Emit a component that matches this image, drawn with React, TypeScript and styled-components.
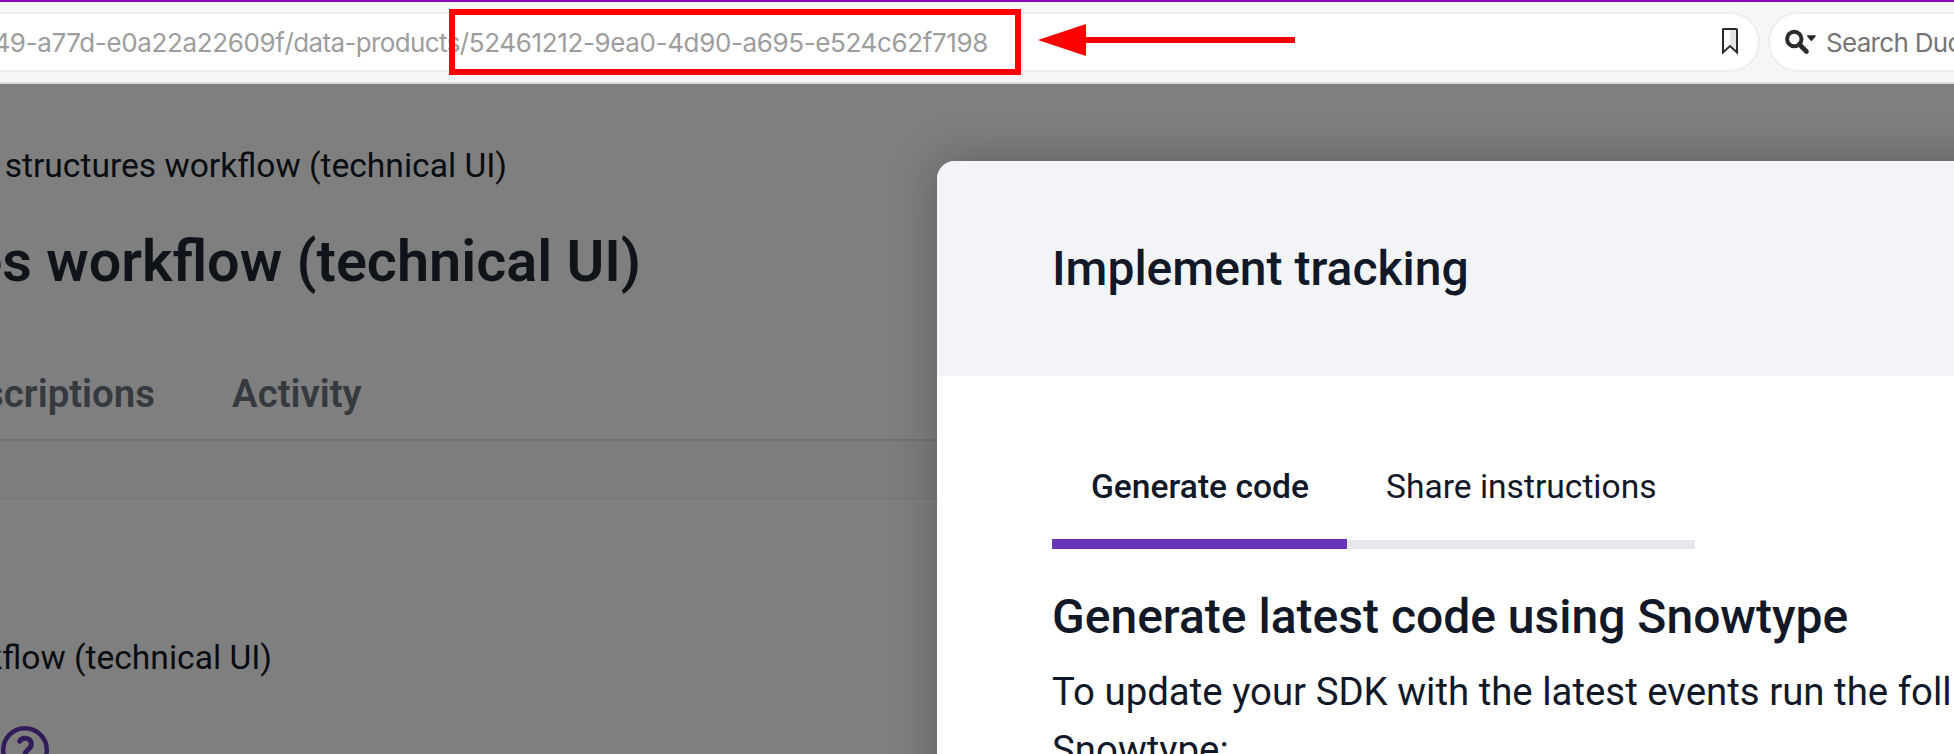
import React from 'react';
import styled, { createGlobalStyle } from 'styled-components';

const GlobalStyle = createGlobalStyle`
  * { box-sizing: border-box; }
  body { margin: 0; overflow: hidden; background: #808080; font-family: Roboto, "Liberation Sans", sans-serif; }
`;

const Window = styled.div`
  position: relative;
  display: flex;
  flex-direction: column;
  width: 1954px;
  height: 754px;
  overflow: hidden;
  color: #111827;
`;

const Toolbar = styled.header`
  position: relative;
  z-index: 2;
  flex: none;
  display: flex;
  gap: 8px;
  height: 84px;
  padding-top: 10px;
  border-top: 2px solid #8a00b8;
  border-bottom: 2px solid #dcdcdc;
  background: #f6f6f6;
  font-family: Inter, "Liberation Sans", sans-serif;
  font-size: 26px;
  white-space: nowrap;
`;

const UrlBar = styled.div`
  flex: none;
  display: flex;
  align-items: center;
  justify-content: space-between;
  width: 1760px;
  height: 60px;
  padding-right: 19px;
  border: 2px solid #eeeeee;
  border-left: 0;
  border-radius: 0 30px 30px 0;
  background: #fff;
`;

const Url = styled.div`
  display: flex;
  justify-content: flex-end;
  width: 988px;
  overflow: hidden;
  color: #9d9d9d;
  letter-spacing: -0.37px;
`;

const PathSegment = styled.span`
  letter-spacing: -0.62px;
`;

const SearchBar = styled.div`
  flex: none;
  display: flex;
  align-items: center;
  width: 300px;
  height: 60px;
  padding-left: 15px;
  border: 2px solid #eeeeee;
  border-radius: 30px;
  background: #fff;
  color: #757575;
  letter-spacing: -0.7px;
  svg { flex: none; margin-right: 10px; }
`;

const Highlight = styled.div`
  position: absolute;
  left: 449px;
  top: 7px;
  width: 572px;
  height: 66px;
  border: 6px solid #f00;
`;

const Arrow = styled.svg`
  position: absolute;
  left: 1038px;
  top: 22px;
`;

const Page = styled.main`
  flex: 1;
  min-height: 0;
  padding-top: 62px;
  overflow: hidden;
  background: #fff;
  white-space: nowrap;
`;

const ClippedLine = styled.div<{ $end: number }>`
  display: flex;
  justify-content: flex-end;
  width: ${(p) => p.$end}px;
  overflow: hidden;
`;

const Crumb = styled(ClippedLine)`
  font-size: 33.6px;
  line-height: 39px;
`;

const Heading = styled(ClippedLine)`
  margin-top: 43px;
  font-size: 57.6px;
  font-weight: 600;
  line-height: 67px;
  color: #1f2937;
`;

const PageTabs = styled.nav`
  display: flex;
  gap: 77px;
  margin-top: 76px;
  padding-bottom: 23px;
  border-bottom: 2px solid #e4e4e4;
  font-size: 38.4px;
  font-weight: 600;
  line-height: 45px;
  color: #6b7280;
`;

const Strip = styled.div`
  height: 58px;
  border-bottom: 1px solid #ececec;
  background: #fafafa;
`;

const Card = styled.section`
  padding-top: 139px;
  svg { display: block; margin: 49px 0 0 1px; }
`;

const Backdrop = styled.div`
  position: absolute;
  z-index: 1;
  inset: 84px 0 0 0;
  overflow: hidden;
  background: rgba(0, 0, 0, 0.5);
`;

const Modal = styled.section`
  width: 1200px;
  height: 900px;
  margin: 77px 0 0 937px;
  border-radius: 18px;
  overflow: hidden;
  background: #fff;
  box-shadow: 0 0 48px rgba(0, 0, 0, 0.27);
  white-space: nowrap;
`;

const ModalHeader = styled.div`
  display: flex;
  align-items: center;
  height: 215px;
  padding-left: 115px;
  background: #f3f4f8;
`;

const ModalTitle = styled.h2`
  margin: 0;
  font-size: 48px;
  font-weight: 500;
  line-height: 57px;
`;

const ModalBody = styled.div`
  padding: 76px 0 0 115px;
`;

const Tabs = styled.div`
  display: flex;
`;

const Tab = styled.div<{ $active?: boolean }>`
  width: ${(p) => (p.$active ? 295 : 348)}px;
  height: 97px;
  padding: 15px 0 0 39px;
  border-bottom: 9px solid ${(p) => (p.$active ? '#6735b6' : '#e4e7eb')};
  box-shadow: ${(p) => (p.$active ? 'inset 0 -1px #6735b6' : 'none')};
  font-size: 33.6px;
  font-weight: ${(p) => (p.$active ? 500 : 400)};
  line-height: 39px;
`;

const SectionTitle = styled.h3`
  margin: 39px 0 0;
  font-size: 48px;
  font-weight: 500;
  line-height: 57px;
`;

const Copy = styled.p`
  margin: 18px 0 0;
  font-size: 38.4px;
  line-height: 57.6px;
`;

export default function App() {
  return (
    <>
      <GlobalStyle />
      <Window>
        <Toolbar>
          <UrlBar>
            <Url>
              49-a77d-e0a22a22609f
              <PathSegment>/data-products</PathSegment>
              /52461212-9ea0-4d90-a695-e524c62f7198
            </Url>
            <svg width="18" height="30" viewBox="0 1 18 30">
              <path d="M9 3h7v22l-7-6z" fill="#e4e4e4" />
              <path d="M2 3.2Q2 3 3 3H15Q16 3 16 4V26.5L9 20L2 26.5Z" fill="none" stroke="#2b2b2b" strokeWidth="2" />
            </svg>
          </UrlBar>
          <SearchBar>
            <svg width="31" height="26" viewBox="0 0 31 26">
              <circle cx="9.3" cy="10" r="7.2" fill="none" stroke="#2b2b2b" strokeWidth="4" />
              <path d="M14.5 15.5L21.5 22.5" stroke="#2b2b2b" strokeWidth="4.6" strokeLinecap="round" />
              <path d="M22.8 7H30L26.4 11.2Z" fill="#2b2b2b" stroke="#2b2b2b" strokeWidth="1.6" strokeLinejoin="round" />
            </svg>
            Search Duc
          </SearchBar>
          <Highlight />
          <Arrow width="258" height="32" viewBox="0 0 258 32">
            <path d="M0 16L48 0V13H257V19H48V32Z" fill="#f00" />
          </Arrow>
        </Toolbar>
        <Page>
          <Crumb $end={507}>structures workflow (technical UI)</Crumb>
          <Heading $end={641}>es workflow (technical UI)</Heading>
          <PageTabs>
            <ClippedLine $end={155}>scriptions</ClippedLine>
            <span>Activity</span>
          </PageTabs>
          <Strip />
          <Card>
            <Crumb as="div" $end={272}>kflow (technical UI)</Crumb>
            <svg width="48" height="48" viewBox="0 0 48 48" fill="none" stroke="#6735b6">
              <circle cx="24" cy="24" r="21.8" strokeWidth="4.4" />
              <path d="M18.7 15.2C21 11 30 11 30.3 18C30.3 24 24 23 24 29" strokeWidth="5" strokeLinecap="round" />
            </svg>
          </Card>
        </Page>
        <Backdrop>
          <Modal>
            <ModalHeader>
              <ModalTitle>Implement tracking</ModalTitle>
            </ModalHeader>
            <ModalBody>
              <Tabs>
                <Tab $active>Generate code</Tab>
                <Tab>Share instructions</Tab>
              </Tabs>
              <SectionTitle>Generate latest code using Snowtype</SectionTitle>
              <Copy>
                To update your SDK with the latest events run the foll
                <br />
                Snowtype:
              </Copy>
            </ModalBody>
          </Modal>
        </Backdrop>
      </Window>
    </>
  );
}
